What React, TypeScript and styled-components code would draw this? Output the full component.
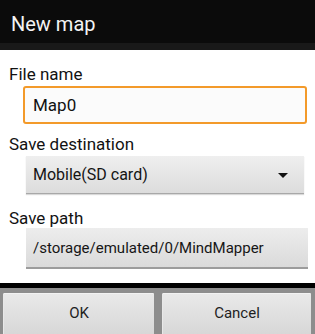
import React, { useState } from 'react';
import styled, { createGlobalStyle } from 'styled-components';

const GlobalStyle = createGlobalStyle`
  html, body {
    margin: 0;
    padding: 0;
    background: #ffffff;
  }
  body {
    font-family: Roboto, "Noto Sans", "Liberation Sans", sans-serif;
  }
`;

const App: React.FC = () => {
  const [fileName, setFileName] = useState('Map0');

  return (
    <>
      <GlobalStyle />
      <Dialog>
        <TitleBar>
          <Title>New map</Title>
        </TitleBar>
        <Content>
          <Label>File name</Label>
          <NameInput
            value={fileName}
            onChange={(e) => setFileName(e.target.value)}
            $top={2}
          />
          <Label $top={10}>Save destination</Label>
          <Spinner $top={2}>
            <SpinnerText>Mobile(SD card)</SpinnerText>
            <Arrow />
          </Spinner>
          <Label $top={14}>Save path</Label>
          <PathBox>/storage/emulated/0/MindMapper</PathBox>
        </Content>
        <Divider />
        <ButtonBar>
          <DialogButton>OK</DialogButton>
          <DialogButton>Cancel</DialogButton>
        </ButtonBar>
      </Dialog>
    </>
  );
};

const Dialog = styled.div`
  width: 315px;
  height: 334px;
  display: flex;
  flex-direction: column;
  overflow: hidden;
`;

const TitleBar = styled.div`
  height: 43px;
  background-color: #0b0b0b;
  border-bottom: 7px solid #191919;
  padding-left: 11px;
`;

const Title = styled.div`
  padding-top: 12px;
  font-size: 20px;
  line-height: 24px;
  color: #f4f4f4;
`;

const Content = styled.div`
  flex: 1;
  display: flex;
  flex-direction: column;
  padding: 14px 0 0 0;
  background-color: #ffffff;
`;

const Label = styled.div<{ $top?: number }>`
  margin: ${(p) => p.$top ?? 0}px 0 0 9px;
  font-size: 17px;
  line-height: 20px;
  color: #121212;
`;

const NameInput = styled.input<{ $top?: number }>`
  box-sizing: border-box;
  margin: ${(p) => p.$top ?? 0}px 8px 0 23px;
  height: 38px;
  padding: 0 8px;
  border: 2px solid #f39a2a;
  border-radius: 3px;
  background-color: #fbfbfb;
  font-family: inherit;
  font-size: 17px;
  color: #111;
  outline: none;
`;

const Spinner = styled.div<{ $top?: number }>`
  box-sizing: border-box;
  margin: ${(p) => p.$top ?? 0}px 11px 0 26px;
  height: 38px;
  padding: 0 16px 0 7px;
  display: flex;
  align-items: center;
  justify-content: space-between;
  background: linear-gradient(#efefef, #dcdcdc);
  border-bottom: 1px solid #a8a8a8;
  box-shadow: 0 1px 1px rgba(0, 0, 0, 0.15);
`;

const SpinnerText = styled.span`
  font-size: 16px;
  color: #141414;
`;

const Arrow = styled.span`
  width: 0;
  height: 0;
  margin-top: 2px;
  border-left: 5px solid transparent;
  border-right: 5px solid transparent;
  border-top: 5px solid #111;
`;

const PathBox = styled.div`
  box-sizing: border-box;
  margin: 0 7px 0 26px;
  height: 41px;
  padding: 0 7px;
  display: flex;
  align-items: center;
  background: linear-gradient(#ededed, #dadada);
  border-bottom: 2px solid #9c9c9c;
  font-size: 15px;
  color: #161616;
`;

const Divider = styled.div`
  height: 5px;
  background-color: #000;
`;

const ButtonBar = styled.div`
  height: 46px;
  box-sizing: border-box;
  padding: 5px 4px 0 3px;
  display: grid;
  grid-template-columns: 151px 1fr;
  column-gap: 8px;
  background-color: #8d8d8d;
`;

const DialogButton = styled.button`
  height: 44px;
  border: none;
  border-top: 1px solid #f2f2f2;
  border-left: 1px solid #e8e8e8;
  border-radius: 1px;
  background: linear-gradient(#e9e9e9, #d6d6d6);
  font-family: inherit;
  font-size: 15px;
  color: #1e1e1e;
  padding: 0 0 5px 0;
`;

export default App;
